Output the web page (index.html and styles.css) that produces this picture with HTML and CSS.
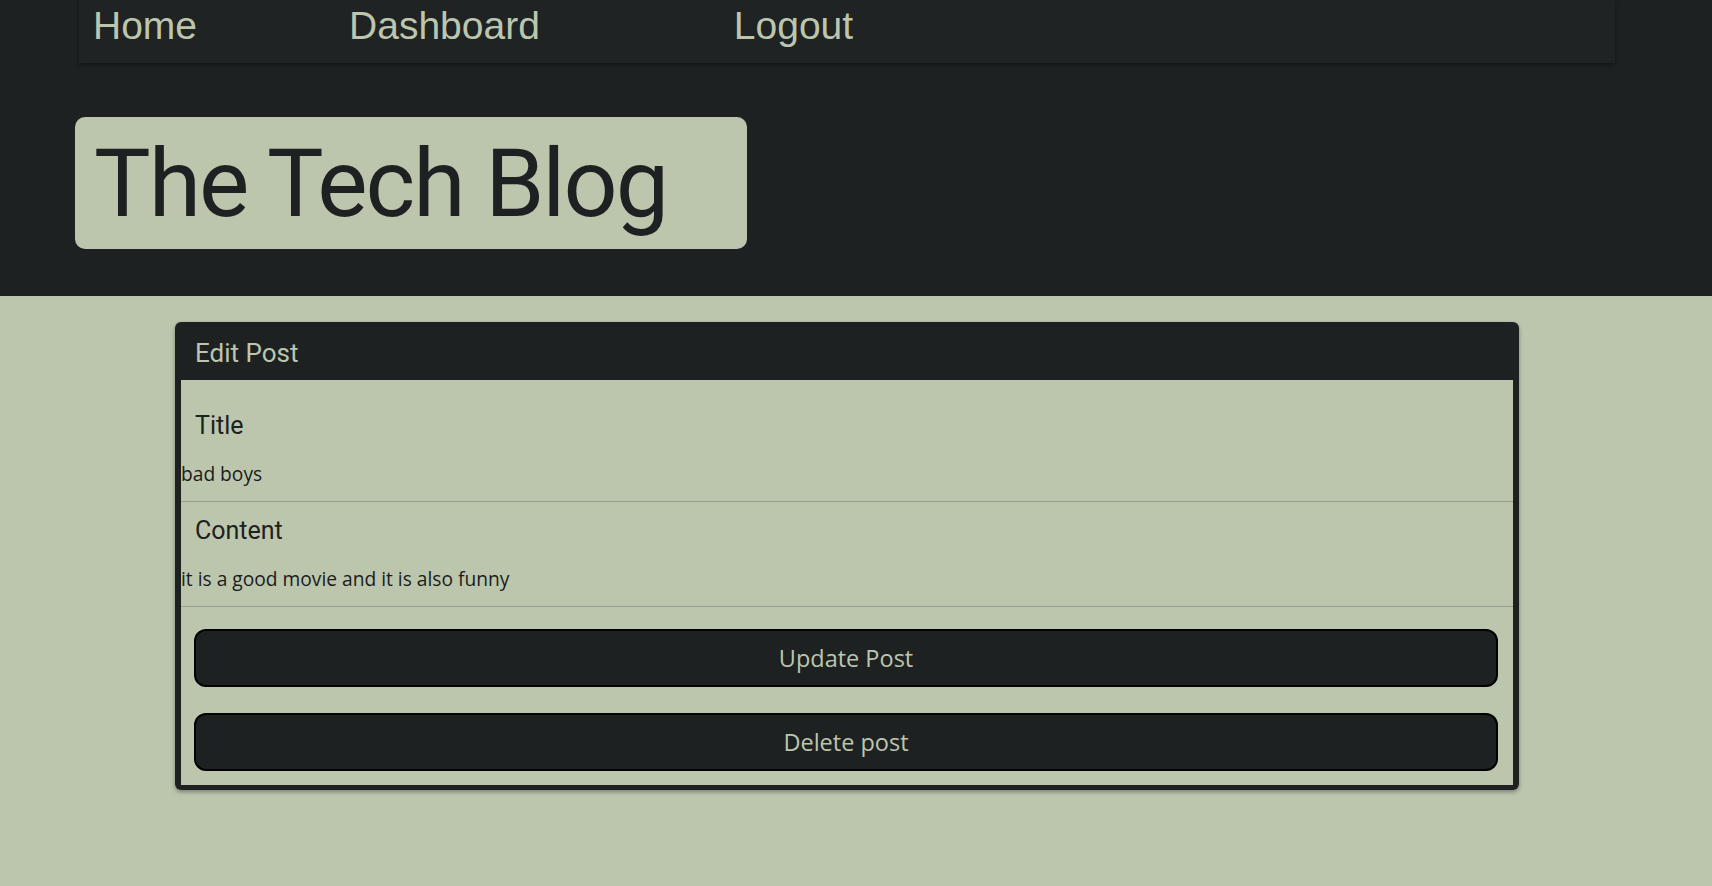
FILE: index.html
```html
<!DOCTYPE html>
<html lang="en">
<head>
<meta charset="utf-8">
<title>The Tech Blog</title>
<link rel="stylesheet" href="styles.css">
</head>
<body>
<header class="site-header">
  <nav class="topnav">
    <a class="nav-link nav-home" href="#">Home</a>
    <a class="nav-link nav-dash" href="#">Dashboard</a>
    <a class="nav-link" href="#">Logout</a>
  </nav>
  <div class="brand">
    <h1 class="brand-title">The Tech Blog</h1>
  </div>
</header>
<main class="page">
  <section class="card">
    <div class="card-header">Edit Post</div>
    <div class="card-body">
      <div class="field">
        <h3 class="field-label">Title</h3>
        <p class="field-value">bad boys</p>
      </div>
      <div class="field">
        <h3 class="field-label">Content</h3>
        <p class="field-value">it is a good movie and it is also funny</p>
      </div>
      <div class="actions">
        <button class="btn" type="button">Update Post</button>
        <button class="btn" type="button">Delete post</button>
      </div>
    </div>
  </section>
</main>
</body>
</html>
```
FILE: styles.css
```css
* { box-sizing: border-box; }

html, body {
  margin: 0;
  padding: 0;
}

body {
  background: #bcc6ad;
  color: #1e2122;
  font-family: "Open Sans", "Noto Sans", sans-serif;
  height: 886px;
  overflow: hidden;
}

.site-header {
  background: #1e2122;
  height: 296px;
  display: flex;
  flex-direction: column;
}

.topnav {
  margin: 0 97px 0 79px;
  height: 63px;
  padding: 3px 0 0 14px;
  display: flex;
  align-items: flex-start;
  background: #1f2323;
  box-shadow: 0 2px 4px rgba(0, 0, 0, 0.35);
}

.nav-link {
  font-family: "Liberation Sans", Arial, sans-serif;
  font-size: 39px;
  line-height: 45px;
  color: #bcc6ad;
  text-decoration: none;
}

.nav-home { margin-right: 152px; }
.nav-dash { margin-right: 194px; }

.brand {
  margin: 54px 0 0 75px;
  width: 672px;
  height: 132px;
  background: #bcc6ad;
  border-radius: 10px;
  padding: 9px 0 0 19px;
}

.brand-title {
  margin: 0;
  font-family: Roboto, "Noto Sans", sans-serif;
  font-weight: 400;
  font-size: 95px;
  line-height: 115px;
  letter-spacing: -2px;
  color: #1e2122;
}

.page {
  padding: 26px 0 0 175px;
}

.card {
  width: 1344px;
  border-radius: 6px;
  box-shadow: 0 2px 4px rgba(0, 0, 0, 0.35);
}

.card-header {
  height: 58px;
  background: #1e2122;
  border-radius: 6px 6px 0 0;
  padding: 16px 20px 0;
  font-family: Roboto, "Noto Sans", sans-serif;
  font-size: 26px;
  line-height: 30px;
  color: #bcc6ad;
}

.card-body {
  border: 6px solid #1e2122;
  border-top: 0;
  border-bottom-width: 5px;
  border-radius: 0 0 6px 6px;
  padding: 17px 0 14px;
}

.field {
  padding: 14px 0 13px;
  border-bottom: 1px solid #979e8d;
}

.field-label {
  margin: 0 0 19px 14px;
  font-family: Roboto, "Noto Sans", sans-serif;
  font-weight: 400;
  font-size: 25px;
  line-height: 30px;
  color: #1e2122;
}

.field-value {
  margin: 0;
  font-family: "Open Sans", "Noto Sans", sans-serif;
  font-size: 19.2px;
  line-height: 28px;
  color: #1a1c1c;
}

.actions {
  display: flex;
  flex-direction: column;
  gap: 26px;
  padding: 22px 15px 0 13px;
}

.btn {
  height: 58px;
  width: 100%;
  background: #1e2122;
  border: 2px solid #000;
  border-radius: 12px;
  color: #bcc6ad;
  font-family: "Open Sans", "Noto Sans", sans-serif;
  font-size: 23.5px;
  cursor: pointer;
}
```
